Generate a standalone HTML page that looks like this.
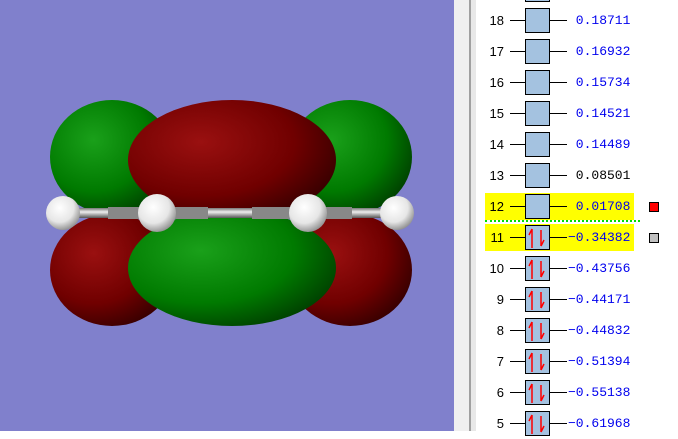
<!DOCTYPE html>
<html><head><style>
body{margin:0;width:678px;height:431px;overflow:hidden;background:#fff;position:relative;font-family:"Liberation Mono",monospace}
.r{position:absolute;left:480px;width:200px;height:31px}
.n{position:absolute;right:176px;top:0;font:13px "Liberation Sans",sans-serif;color:#000;line-height:31px}
.l{position:absolute;top:15px;height:1px;background:#000}
.b{position:absolute;left:45px;top:3px;width:23px;height:23px;border:1px solid #000;background:#a4c2e0}
.v{position:absolute;left:88px;top:0;line-height:31px;font-size:13px;color:#0000ee;white-space:pre}
</style></head><body>
<svg width="454" height="431" style="position:absolute;left:0;top:0">
<defs>
<radialGradient id="g" cx="0.35" cy="0.35" r="0.75"><stop offset="0" stop-color="#1aa01a"/><stop offset="0.6" stop-color="#007a00"/><stop offset="1" stop-color="#003a00"/></radialGradient>
<radialGradient id="rd" cx="0.35" cy="0.35" r="0.75"><stop offset="0" stop-color="#9a1010"/><stop offset="0.6" stop-color="#700000"/><stop offset="1" stop-color="#300000"/></radialGradient>
<radialGradient id="h" cx="0.4" cy="0.35" r="0.7"><stop offset="0" stop-color="#fff"/><stop offset="0.6" stop-color="#e6e6e6"/><stop offset="1" stop-color="#888"/></radialGradient>
<linearGradient id="bd" x1="0" y1="0" x2="0" y2="1"><stop offset="0" stop-color="#777"/><stop offset="0.4" stop-color="#eee"/><stop offset="1" stop-color="#555"/></linearGradient>
</defs>
<rect width="454" height="431" fill="#8080cc"/>
<ellipse cx="112" cy="157" rx="62" ry="57" fill="url(#g)"/>
<ellipse cx="350" cy="157" rx="62" ry="57" fill="url(#g)"/>
<ellipse cx="112" cy="270" rx="62" ry="56" fill="url(#rd)"/>
<ellipse cx="350" cy="270" rx="62" ry="56" fill="url(#rd)"/>
<ellipse cx="232" cy="160" rx="104" ry="60" fill="url(#rd)"/>
<ellipse cx="232" cy="268" rx="104" ry="58" fill="url(#g)"/>
<rect x="63" y="208" width="334" height="10" fill="url(#bd)"/>
<rect x="108" y="207" width="100" height="12" fill="#888"/>
<rect x="252" y="207" width="100" height="12" fill="#888"/>
<circle cx="63" cy="213" r="17" fill="url(#h)"/>
<circle cx="397" cy="213" r="17" fill="url(#h)"/>
<circle cx="157" cy="213" r="19" fill="url(#h)"/>
<circle cx="308" cy="213" r="19" fill="url(#h)"/>
</svg>
<div style="position:absolute;left:454px;top:0;width:15px;height:431px;background:#f0f0f0"></div>
<div style="position:absolute;left:469px;top:0;width:2px;height:431px;background:#a0a0a0"></div>
<div style="position:absolute;left:471px;top:0;width:5px;height:431px;background:#e8e8e8"></div>
<div style="position:absolute;left:485px;top:193px;width:149px;height:27px;background:#ffff00"></div>
<div style="position:absolute;left:485px;top:224px;width:149px;height:27px;background:#ffff00"></div>
<div style="position:absolute;left:485px;top:220px;width:155px;height:0;border-top:2px dotted #00e000"></div>
<div style="position:absolute;left:649px;top:202px;width:8px;height:8px;border:1px solid #000;background:#ff0000"></div>
<div style="position:absolute;left:649px;top:233px;width:8px;height:8px;border:1px solid #000;background:#c0c0c0"></div>
<div id="rows"></div>
<div class="r" style="top:-26px"><div class="l" style="left:30px;width:15px"></div><div class="b"></div><div class="l" style="left:70px;width:17px"></div></div>
<div class="r" style="top:5px"><div class="n">18</div><div class="l" style="left:30px;width:15px"></div><div class="b"></div><div class="l" style="left:70px;width:17px"></div><div class="v"> 0.18711</div></div>
<div class="r" style="top:36px"><div class="n">17</div><div class="l" style="left:30px;width:15px"></div><div class="b"></div><div class="l" style="left:70px;width:17px"></div><div class="v"> 0.16932</div></div>
<div class="r" style="top:67px"><div class="n">16</div><div class="l" style="left:30px;width:15px"></div><div class="b"></div><div class="l" style="left:70px;width:17px"></div><div class="v"> 0.15734</div></div>
<div class="r" style="top:98px"><div class="n">15</div><div class="l" style="left:30px;width:15px"></div><div class="b"></div><div class="l" style="left:70px;width:17px"></div><div class="v"> 0.14521</div></div>
<div class="r" style="top:129px"><div class="n">14</div><div class="l" style="left:30px;width:15px"></div><div class="b"></div><div class="l" style="left:70px;width:17px"></div><div class="v"> 0.14489</div></div>
<div class="r" style="top:160px"><div class="n">13</div><div class="l" style="left:30px;width:15px"></div><div class="b"></div><div class="l" style="left:70px;width:17px"></div><div class="v" style="color:#000"> 0.08501</div></div>
<div class="r" style="top:191px"><div class="n">12</div><div class="l" style="left:30px;width:15px"></div><div class="b"></div><div class="l" style="left:70px;width:17px"></div><div class="v"> 0.01708</div></div>
<script>
var d=[[11,"-0.34382"],[10,"-0.43756"],[9,"-0.44171"],[8,"-0.44832"],[7,"-0.51394"],[6,"-0.55138"],[5,"-0.61968"]];
var h="";
d.forEach(function(x,i){var t=222+i*31;
h+='<div class="r" style="top:'+t+'px"><div class="n">'+x[0]+'</div><div class="l" style="left:30px;width:15px"></div><div class="b"><svg width="23" height="23" style="position:absolute;left:0;top:0"><path d="M6 22V3M6 3L3 9" stroke="#f00" stroke-width="1.5" fill="none"/><path d="M15 4V20M15 20L18 14" stroke="#f00" stroke-width="1.5" fill="none"/></svg></div><div class="l" style="left:70px;width:17px"></div><div class="v">'+x[1].replace("-","\u2212")+'</div></div>';});
document.getElementById("rows").innerHTML=h;
</script>
</body></html>
